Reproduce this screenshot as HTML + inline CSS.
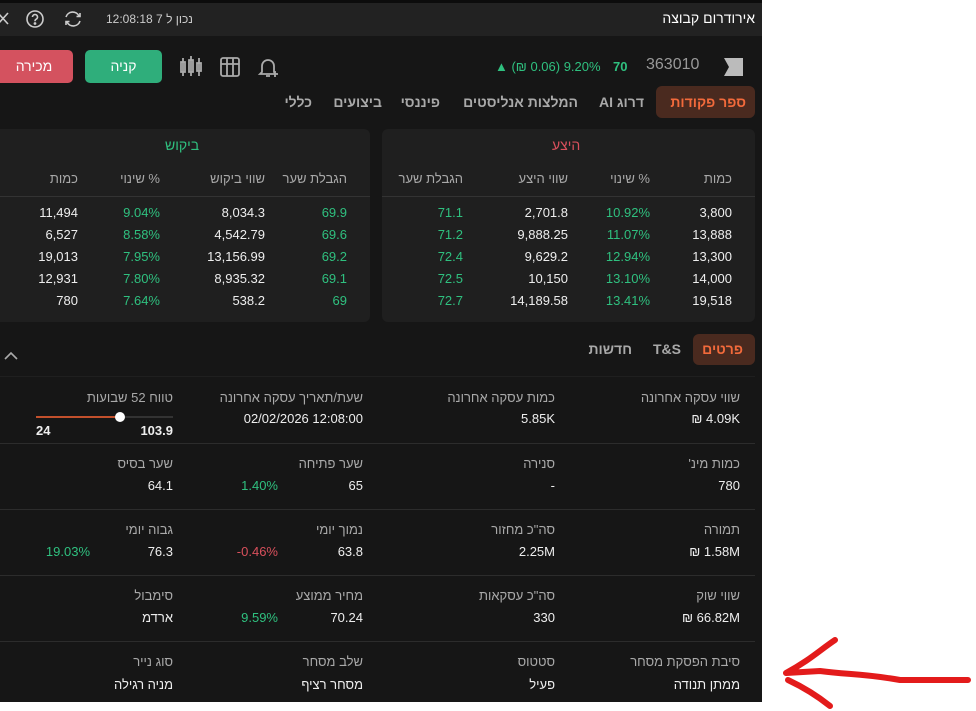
<!DOCTYPE html>
<html><head><meta charset="utf-8"><style>
*{margin:0;padding:0;box-sizing:border-box}
body{width:976px;height:711px;background:#fff;position:relative;overflow:hidden;font-family:"Liberation Sans","Noto Sans CJK SC",sans-serif}
#app{position:absolute;left:0;top:0;width:976px;height:711px}
.t{position:absolute;white-space:nowrap;line-height:16px;font-size:13px;color:#eee}
.h{direction:rtl}
.l{color:#a9a9a9;direction:rtl}
.g{color:#2fc07f}
.r{color:#d9505c}
.p{position:absolute;background:#1f1f1f;border-radius:6px}
.sep{position:absolute;height:1px;background:#2c2c2c}
</style></head><body>
<div id="app">
<div style="position:absolute;left:0;top:0;width:762px;height:702px;background:#161616"></div>
<div style="position:absolute;left:0;top:0;width:762px;height:3px;background:#0c0c0c"></div>
<div style="position:absolute;left:0;top:3px;width:762px;height:33px;background:#222"></div>
<div class="t h" style="right:221px;top:10px;font-size:14px;color:#fff">אירודרום קבוצה</div>
<div class="t" style="left:106px;top:11px;font-size:12px;color:#ccc">12:08:18 נכון ל 7</div>
<svg style="position:absolute;left:0;top:10px" width="90" height="20" viewBox="0 0 90 20" fill="none" stroke="#ccc" stroke-width="1.6">
<path d="M-2 3 L8 14 M8 3 L-2 14"/>
<circle cx="35" cy="9" r="8"/>
<path d="M32.5 7 a2.5 2.5 0 1 1 3.5 2.3 c-1 .5 -1 1 -1 2" /><circle cx="35" cy="13.5" r=".6" fill="#ccc"/>
<path d="M66 7 a7 7 0 0 1 13-1 M80 3 v3.5 h-3.5 M80 11 a7 7 0 0 1 -13 1 M66 15 v-3.5 h3.5"/>
</svg>
<div style="position:absolute;left:-5px;top:50px;width:78px;height:33px;background:#d4525f;border-radius:5px;color:#fff;font-size:14px;text-align:center;line-height:33px">מכירה</div>
<div style="position:absolute;left:85px;top:50px;width:77px;height:33px;background:#2fae7b;border-radius:5px;color:#fff;font-size:14px;text-align:center;line-height:33px">קניה</div>
<svg style="position:absolute;left:178px;top:54px" width="108" height="26" viewBox="0 0 108 26" fill="none" stroke="#aaa" stroke-width="1.8">
<path d="M5 4v18M3 8h4v10h-4z M13 2v20M11 6h4v12h-4z M21 4v18M19 9h4v8h-4z"/>
<rect x="43" y="4" width="18" height="18" rx="2"/><path d="M49 4v18M55 4v18M43 10h18"/>
<path d="M84 18v-6a6 6 0 0 1 12 0v6l2 2h-16z M88 22h4 M97 17v6M94 20h6"/>
</svg>
<svg style="position:absolute;left:724px;top:58px" width="20" height="18"><path d="M0 0H19V18H0L5 9Z" fill="#bbb"/></svg>
<div class="t" style="left:646px;top:57px;font-size:16px;color:#999">363010</div>
<div class="t" style="left:613px;top:59px;font-size:13px;font-weight:bold;color:#2fc07f">70</div>
<div class="t g" style="left:495px;top:59px;font-size:13px"><bdo dir="ltr">▲ (₪ 0.06) 9.20%</bdo></div>
<div style="position:absolute;left:656px;top:86px;width:99px;height:32px;background:#4a2a1f;border-radius:6px"></div>
<div class="t h" style="right:230px;top:94px;font-size:14px;color:#f26a3b;font-weight:bold">ספר פקודות</div>
<div class="t l" style="right:332px;top:94px;font-size:14px;font-weight:bold">דרוג AI</div>
<div class="t l" style="right:398px;top:94px;font-size:14px;font-weight:bold">המלצות אנליסטים</div>
<div class="t l" style="right:536px;top:94px;font-size:14px;font-weight:bold">פיננסי</div>
<div class="t l" style="right:594px;top:94px;font-size:14px;font-weight:bold">ביצועים</div>
<div class="t l" style="right:664px;top:94px;font-size:14px;font-weight:bold">כללי</div>

<div class="p" style="left:382px;top:129px;width:373px;height:193px"></div>
<div class="p" style="left:-10px;top:129px;width:380px;height:193px"></div>
<div class="sep" style="left:382px;top:196px;width:373px;background:#333"></div>
<div class="sep" style="left:0;top:196px;width:370px;background:#333"></div>
<div class="t r h" style="left:552px;top:137px;font-size:14px">היצע</div>
<div class="t g h" style="left:165px;top:137px;font-size:14px">ביקוש</div>
<div class="t l" style="right:244px;top:171px">כמות</div>
<div class="t l" style="right:326px;top:171px">% שינוי</div>
<div class="t l" style="right:408px;top:171px">שווי היצע</div>
<div class="t l" style="right:513px;top:171px">הגבלת שער</div>
<div class="t l" style="right:629px;top:171px">הגבלת שער</div>
<div class="t l" style="right:711px;top:171px">שווי ביקוש</div>
<div class="t l" style="right:816px;top:171px">% שינוי</div>
<div class="t l" style="right:898px;top:171px">כמות</div>
<div style="position:absolute;left:0;top:205px;width:976px;font-size:13px">
<div class="t" style="right:244px;top:0">3,800</div><div class="t g" style="right:326px;top:0">10.92%</div><div class="t" style="right:408px;top:0">2,701.8</div><div class="t g" style="right:513px;top:0">71.1</div>
<div class="t" style="right:244px;top:22px">13,888</div><div class="t g" style="right:326px;top:22px">11.07%</div><div class="t" style="right:408px;top:22px">9,888.25</div><div class="t g" style="right:513px;top:22px">71.2</div>
<div class="t" style="right:244px;top:44px">13,300</div><div class="t g" style="right:326px;top:44px">12.94%</div><div class="t" style="right:408px;top:44px">9,629.2</div><div class="t g" style="right:513px;top:44px">72.4</div>
<div class="t" style="right:244px;top:66px">14,000</div><div class="t g" style="right:326px;top:66px">13.10%</div><div class="t" style="right:408px;top:66px">10,150</div><div class="t g" style="right:513px;top:66px">72.5</div>
<div class="t" style="right:244px;top:88px">19,518</div><div class="t g" style="right:326px;top:88px">13.41%</div><div class="t" style="right:408px;top:88px">14,189.58</div><div class="t g" style="right:513px;top:88px">72.7</div>
<div class="t g" style="right:629px;top:0">69.9</div><div class="t" style="right:711px;top:0">8,034.3</div><div class="t g" style="right:816px;top:0">9.04%</div><div class="t" style="right:898px;top:0">11,494</div>
<div class="t g" style="right:629px;top:22px">69.6</div><div class="t" style="right:711px;top:22px">4,542.79</div><div class="t g" style="right:816px;top:22px">8.58%</div><div class="t" style="right:898px;top:22px">6,527</div>
<div class="t g" style="right:629px;top:44px">69.2</div><div class="t" style="right:711px;top:44px">13,156.99</div><div class="t g" style="right:816px;top:44px">7.95%</div><div class="t" style="right:898px;top:44px">19,013</div>
<div class="t g" style="right:629px;top:66px">69.1</div><div class="t" style="right:711px;top:66px">8,935.32</div><div class="t g" style="right:816px;top:66px">7.80%</div><div class="t" style="right:898px;top:66px">12,931</div>
<div class="t g" style="right:629px;top:88px">69</div><div class="t" style="right:711px;top:88px">538.2</div><div class="t g" style="right:816px;top:88px">7.64%</div><div class="t" style="right:898px;top:88px">780</div>
</div>

<div style="position:absolute;left:693px;top:334px;width:62px;height:31px;background:#4a2a1f;border-radius:6px"></div>
<div class="t h" style="right:233px;top:341px;font-size:14px;color:#f26a3b;font-weight:bold">פרטים</div>
<div class="t" style="right:295px;top:341px;font-size:14px;font-weight:bold;color:#a9a9a9">T&amp;S</div>
<div class="t l" style="right:344px;top:341px;font-size:14px;font-weight:bold">חדשות</div>
<svg style="position:absolute;left:3px;top:351px" width="16" height="10"><path d="M2 8L8 2L14 8" stroke="#aaa" stroke-width="1.6" fill="none"/></svg>
<div class="sep" style="left:0;top:376px;width:755px;background:#1f1f1f"></div>
<div class="sep" style="left:0;top:443px;width:755px"></div>
<div class="sep" style="left:0;top:509px;width:755px"></div>
<div class="sep" style="left:0;top:575px;width:755px"></div>
<div class="sep" style="left:0;top:641px;width:755px"></div>

<div class="t l" style="right:236px;top:390px">שווי עסקה אחרונה</div><div class="t" style="right:236px;top:411px"><bdo dir="ltr">₪ 4.09K</bdo></div>
<div class="t l" style="right:421px;top:390px">כמות עסקה אחרונה</div><div class="t" style="right:421px;top:411px">5.85K</div>
<div class="t l" style="right:613px;top:390px">שעת/תאריך עסקה אחרונה</div><div class="t" style="right:613px;top:411px">02/02/2026 12:08:00</div>
<div class="t l" style="right:803px;top:390px">טווח 52 שבועות</div>
<div style="position:absolute;left:36px;top:416px;width:137px;height:2px;background:#333"></div>
<div style="position:absolute;left:36px;top:416px;width:84px;height:2px;background:#c2502c"></div>
<div style="position:absolute;left:115px;top:412px;width:10px;height:10px;border-radius:50%;background:#fff"></div>
<div class="t" style="left:36px;top:423px;font-weight:bold">24</div><div class="t" style="right:803px;top:423px;font-weight:bold">103.9</div>

<div class="t l" style="right:236px;top:456px">כמות מינ'</div><div class="t" style="right:236px;top:478px">780</div>
<div class="t l" style="right:421px;top:456px">סנירה</div><div class="t" style="right:421px;top:478px">-</div>
<div class="t l" style="right:613px;top:456px">שער פתיחה</div><div class="t" style="right:613px;top:478px">65</div><div class="t g" style="right:698px;top:478px">1.40%</div>
<div class="t l" style="right:803px;top:456px">שער בסיס</div><div class="t" style="right:803px;top:478px">64.1</div>

<div class="t l" style="right:236px;top:522px">תמורה</div><div class="t" style="right:236px;top:544px"><bdo dir="ltr">₪ 1.58M</bdo></div>
<div class="t l" style="right:421px;top:522px">סה"כ מחזור</div><div class="t" style="right:421px;top:544px">2.25M</div>
<div class="t l" style="right:613px;top:522px">נמוך יומי</div><div class="t" style="right:613px;top:544px">63.8</div><div class="t r" style="right:698px;top:544px">-0.46%</div>
<div class="t l" style="right:803px;top:522px">גבוה יומי</div><div class="t" style="right:803px;top:544px">76.3</div><div class="t g" style="right:886px;top:544px">19.03%</div>

<div class="t l" style="right:236px;top:588px">שווי שוק</div><div class="t" style="right:236px;top:610px"><bdo dir="ltr">₪ 66.82M</bdo></div>
<div class="t l" style="right:421px;top:588px">סה"כ עסקאות</div><div class="t" style="right:421px;top:610px">330</div>
<div class="t l" style="right:613px;top:588px">מחיר ממוצע</div><div class="t" style="right:613px;top:610px">70.24</div><div class="t g" style="right:698px;top:610px">9.59%</div>
<div class="t l" style="right:803px;top:588px">סימבול</div><div class="t h" style="right:803px;top:610px">ארדמ</div>

<div class="t l" style="right:236px;top:654px">סיבת הפסקת מסחר</div><div class="t h" style="right:236px;top:677px">ממתן תנודה</div>
<div class="t l" style="right:421px;top:654px">סטטוס</div><div class="t h" style="right:421px;top:677px">פעיל</div>
<div class="t l" style="right:613px;top:654px">שלב מסחר</div><div class="t h" style="right:613px;top:677px">מסחר רציף</div>
<div class="t l" style="right:803px;top:654px">סוג נייר</div><div class="t h" style="right:803px;top:677px">מניה רגילה</div>
</div>
<svg style="position:absolute;left:770px;top:630px" width="206" height="81" viewBox="0 0 206 81" fill="none" stroke="#e31b1b" stroke-width="6" stroke-linecap="round" stroke-linejoin="round">
<path d="M65 10 C50 20 40 30 16 43 L50 41 C80 45 90 43 130 50 L198 50"/>
<path d="M18 50 C35 58 50 68 60 76"/>
</svg>
</body></html>
